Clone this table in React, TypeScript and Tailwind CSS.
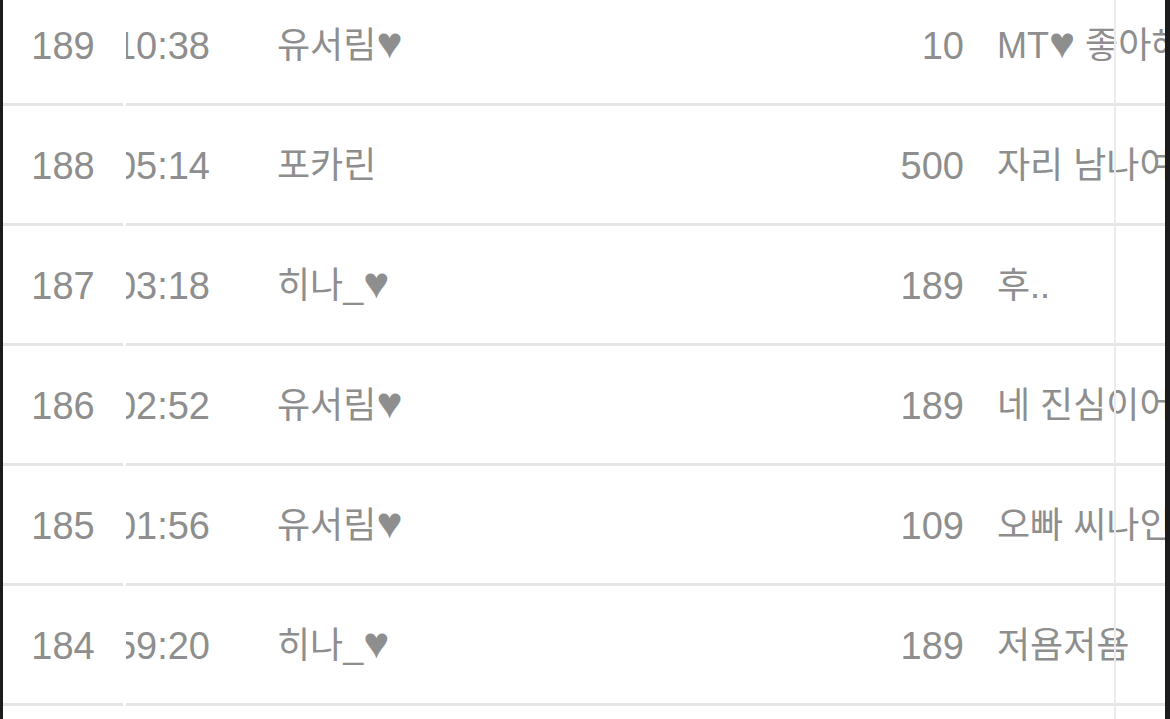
import React from "react";

const rows = [
  { n: "189", t: "21:10:38", name: "유서림♥", amt: "10", msg: "MT♥ 좋아해요" },
  { n: "188", t: "21:05:14", name: "포카린", amt: "500", msg: "자리 남나여" },
  { n: "187", t: "21:03:18", name: "히나_♥", amt: "189", msg: "후.." },
  { n: "186", t: "21:02:52", name: "유서림♥", amt: "189", msg: "네 진심이어요" },
  { n: "185", t: "21:01:56", name: "유서림♥", amt: "109", msg: "오빠 씨나인" },
  { n: "184", t: "20:59:20", name: "히나_♥", amt: "189", msg: "저욤저욤" },
];

function Hearted({ text }: { text: string }) {
  const parts = text.split("♥");
  return (
    <>
      {parts.map((p, i) => (
        <React.Fragment key={i}>
          {p}
          {i < parts.length - 1 && <span className="text-[44px] leading-none">♥</span>}
        </React.Fragment>
      ))}
    </>
  );
}

export default function App() {
  return (
    <div
      className="w-[1170px] h-[719px] overflow-hidden flex bg-white text-[#8e8e8e] text-[36px] leading-none"
      style={{ fontFamily: '"Liberation Sans", "Noto Sans CJK KR", sans-serif' }}
    >
      <div className="w-[3px] shrink-0 bg-[#1c1c1e]" />
      <div className="relative flex-1 overflow-hidden">
        <div className="-mt-[14px] flex flex-col">
          {rows.map((r) => (
            <div key={r.n} className="flex h-[120px] shrink-0">
              <div className="w-[120px] shrink-0 flex items-center justify-center pt-[3px] text-[38px] border-b-[3px] border-[#e5e5e7]">
                {r.n}
              </div>
              <div className="w-[3px] shrink-0" />
              <div className="flex-1 min-w-0 flex items-center pt-[3px] border-b-[3px] border-[#e5e5e7]">
                <div className="w-[84px] shrink-0 overflow-hidden flex justify-end text-[38px]">
                  <span className="shrink-0 whitespace-nowrap">{r.t}</span>
                </div>
                <div className="ml-[67px] w-[560px] shrink-0 whitespace-nowrap h-[38px] flex items-end">
                  <span className="leading-[38px]"><Hearted text={r.name} /></span>
                </div>
                <div className="w-[127px] shrink-0 text-right text-[38px]">{r.amt}</div>
                <div className="ml-[33px] flex-1 min-w-0 overflow-hidden whitespace-nowrap h-[38px] flex items-end">
                  <span className="leading-[38px]"><Hearted text={r.msg} /></span>
                </div>
              </div>
            </div>
          ))}
        </div>
        <div className="absolute top-0 bottom-0 left-[1111px] w-[2px] bg-[#ebebed]" />
      </div>
      <div className="w-[5px] shrink-0 bg-[#1c1c1e]" />
    </div>
  );
}
